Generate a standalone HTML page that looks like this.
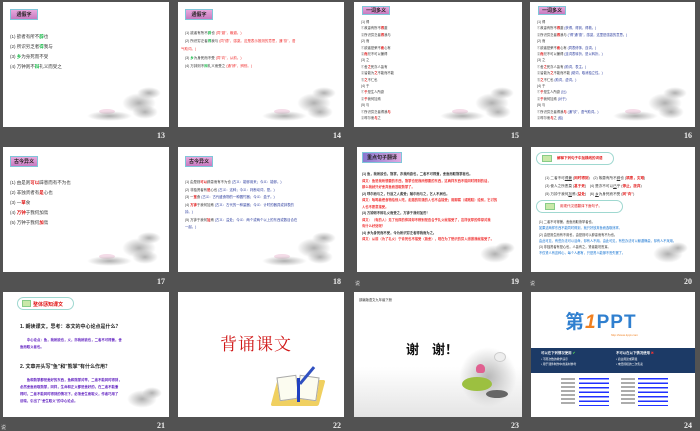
<!DOCTYPE html>
<html><head><meta charset="utf-8"><style>
*{margin:0;padding:0;box-sizing:border-box}
body{width:700px;height:431px;background:#525252;position:relative;overflow:hidden;font-family:"Liberation Sans","Noto Sans CJK SC",sans-serif}
.s{position:absolute;background:#fff;width:166px;height:125px;overflow:hidden}
.n{position:absolute;color:#eee;font-size:8px;font-weight:bold;font-family:"Liberation Serif",serif}
.tag{position:absolute;left:7px;top:7px;width:28px;height:11px;background:linear-gradient(#e7a8dc,#c77ac0);border:1px solid #7fc6d9;font-size:5px;color:#222;font-weight:bold;text-align:center;line-height:10px}
.l{position:absolute;left:7px;font-size:4.5px;color:#333;white-space:nowrap}
.g{color:#1ab94a;font-weight:bold}.r{color:#e01010;font-weight:bold}
.rr{color:#f03030}.b{color:#3040a0}
.lotus{position:absolute;right:2px;bottom:2px;width:80px;height:40px}
.lotus i{position:absolute;border-radius:50%;background:radial-gradient(#b0b0b0,rgba(220,220,220,0) 70%)}
.cap{position:absolute;left:1px;font-size:5px;color:#ddd}
</style></head><body>

<div class="s" style="left:3px;top:2px">
<div class="tag">通假字</div>
<div class="l" style="top:32px">(1) 欲者有所不<span class="g">辟</span>也</div>
<div class="l" style="top:42px">(2) 所识穷乏者<span class="g">得</span>我与</div>
<div class="l" style="top:52px">(3) <span class="g">乡</span>为身死而不受</div>
<div class="l" style="top:62px">(4) 万钟则不<span class="g">辩</span>礼义而受之</div>
<div class="lotus"><i style="left:35px;top:8px;width:34px;height:20px"></i><i style="left:50px;top:2px;width:24px;height:12px"></i><i style="left:12px;top:24px;width:16px;height:5px;background:#f4dce8"></i><i style="left:45px;top:20px;width:26px;height:14px"></i><i style="left:0;top:26px;width:45px;height:10px"></i></div>
</div>
<div class="n" style="left:157px;top:131px">13</div>

<div class="s" style="left:178px;top:2px">
<div class="tag">通假字</div>
<div class="l" style="top:29px;font-size:3.5px">(1) 欲者有所不<span class="g">辟</span>也 <span class="rr">(同"避"，躲避。)</span></div>
<div class="l" style="top:37px;font-size:3.5px">(2) 所识穷乏者<span class="g">得</span>我与 <span class="rr">(同"德"，感激。这是表示推测的意思，通"欤"，语</span></div>
<div class="l" style="top:45px;font-size:3.5px;left:3px"><span class="rr">气助词。)</span></div>
<div class="l" style="top:54px;font-size:3.5px">(3) <span class="g">乡</span>为身死而不受 <span class="rr">(同"向"，从前。)</span></div>
<div class="l" style="top:62px;font-size:3.5px">(4) 万钟则不<span class="g">辩</span>礼义而受之 <span class="rr">(通"辨"，辨别。)</span></div>
<div class="lotus"><i style="left:35px;top:8px;width:34px;height:20px"></i><i style="left:50px;top:2px;width:24px;height:12px"></i><i style="left:12px;top:24px;width:16px;height:5px;background:#f4dce8"></i><i style="left:45px;top:20px;width:26px;height:14px"></i><i style="left:0;top:26px;width:45px;height:10px"></i></div>
</div>
<div class="n" style="left:333px;top:131px">14</div>

<div class="s" style="left:354px;top:2px;width:168px">
<div class="tag" style="left:8px;top:4px;height:9px;line-height:8px">一词多义</div>
<div class="l" style="top:17px;font-size:3.3px;line-height:6.4px">(1) 得<br>①故患有所不<span class="r">得</span>避<br>②所识穷乏者<span class="r">得</span>我与<br>(2) 而<br>①欲者是荣不<span class="r">而</span>心有<br>②<span class="r">而</span>兄不可以兼得<br>(3) 之<br>①舍<span class="r">之</span>死亦人皆有<br>②皆能为<span class="r">之</span>不能而不能<br>③<span class="r">之</span>不仁也<br>(4) 于<br>①<span class="r">于</span>是生人所欲<br>②<span class="r">于</span>我何加焉<br>(5) 与<br>①所识穷乏者得我<span class="r">与</span><br>②呼尔而<span class="r">与</span>之</div>
<div class="lotus"><i style="left:35px;top:8px;width:34px;height:20px"></i><i style="left:50px;top:2px;width:24px;height:12px"></i><i style="left:12px;top:24px;width:16px;height:5px;background:#f4dce8"></i><i style="left:45px;top:20px;width:26px;height:14px"></i><i style="left:0;top:26px;width:45px;height:10px"></i></div>
</div>
<div class="n" style="left:511px;top:131px">15</div>

<div class="s" style="left:530px;top:2px;width:165px">
<div class="tag" style="left:8px;top:4px;height:9px;line-height:8px">一词多义</div>
<div class="l" style="top:17px;font-size:3.3px;line-height:6.4px">(1) 得<br>①故患有所不<span class="r">得</span>避 <span class="b">(获得，得到，得救。)</span><br>②所识穷乏者<span class="r">得</span>我与 <span class="b">("得"通"德"，感激，这里是感激的意思。)</span><br>(2) 而<br>①欲者是荣不<span class="r">而</span>心有 <span class="b">(同表修饰，连词。)</span><br>②<span class="r">而</span>兄不可以兼得 <span class="b">(连词表转折，是以转折。)</span><br>(3) 之<br>①舍<span class="r">之</span>死亦人皆有 <span class="b">(助词，表主。)</span><br>②皆能为<span class="r">之</span>不能而不能 <span class="b">(助词，取消独立性。)</span><br>③<span class="r">之</span>不仁也 <span class="b">(助词，虚词。)</span><br>(4) 于<br>①<span class="r">于</span>是生人所欲 <span class="b">(比)</span><br>②<span class="r">于</span>我何加焉 <span class="b">(对于)</span><br>(5) 与<br>①所识穷乏者得我<span class="r">与</span> <span class="b">(通"欤"，语气助词。)</span><br>②呼尔而<span class="r">与</span>之 <span class="b">(给)</span></div>
<div class="lotus"><i style="left:35px;top:8px;width:34px;height:20px"></i><i style="left:50px;top:2px;width:24px;height:12px"></i><i style="left:12px;top:24px;width:16px;height:5px;background:#f4dce8"></i><i style="left:45px;top:20px;width:26px;height:14px"></i><i style="left:0;top:26px;width:45px;height:10px"></i></div>
</div>
<div class="n" style="left:684px;top:131px">16</div>

<div class="s" style="left:3px;top:147px">
<div class="tag" style="top:9px">古今异义</div>
<div class="l" style="top:33px">(1) 由是则<span class="r">可以</span>辟患而有不为也</div>
<div class="l" style="top:43px">(2) 非独贤者有<span class="r">是</span>心也</div>
<div class="l" style="top:53px">(3) 一<span class="r">箪</span>食</div>
<div class="l" style="top:63px">(4) <span class="r">万钟</span>于我何加焉</div>
<div class="l" style="top:73px">(5) 万钟于我何<span class="r">加</span>焉</div>
<div class="lotus"><i style="left:35px;top:8px;width:34px;height:20px"></i><i style="left:50px;top:2px;width:24px;height:12px"></i><i style="left:12px;top:24px;width:16px;height:5px;background:#f4dce8"></i><i style="left:45px;top:20px;width:26px;height:14px"></i><i style="left:0;top:26px;width:45px;height:10px"></i></div>
</div>
<div class="n" style="left:157px;top:277px">17</div>

<div class="s" style="left:178px;top:147px">
<div class="tag" style="top:9px">古今异义</div>
<div class="l" style="top:32px;font-size:3.4px;line-height:7.5px">(1) 由是则<span class="r">可以</span>辟患而有不为也 <span class="b">(古义：能够用来；今义：能够。)</span><br>(2) 非独贤者有<span class="r">是</span>心也 <span class="b">(古义：这种；今义：判断动词，是。)</span><br>(3) 一<span class="r">箪</span>食 <span class="b">(古义：古代盛食物的一种圆竹器；今义：盒子。)</span><br>(4) <span class="r">万钟</span>于我何加焉 <span class="b">(古义：古代的一种量器；今义：计时的器具或钟表的</span><br><span class="b">钟。)</span><br>(5) 万钟于我何<span class="r">加</span>焉 <span class="b">(古义：益处；今义：两个或两个以上的东西或数目合在</span><br><span class="b">一起。)</span></div>
<div class="lotus"><i style="left:35px;top:8px;width:34px;height:20px"></i><i style="left:50px;top:2px;width:24px;height:12px"></i><i style="left:12px;top:24px;width:16px;height:5px;background:#f4dce8"></i><i style="left:45px;top:20px;width:26px;height:14px"></i><i style="left:0;top:26px;width:45px;height:10px"></i></div>
</div>
<div class="n" style="left:333px;top:277px">18</div>

<div class="s" style="left:357px;top:147px;width:165px">
<div class="tag" style="left:5px;top:5px;width:40px;background:linear-gradient(90deg,#8878d0,#e0a8e0)">重点句子翻译</div>
<div class="l" style="left:5px;top:24px;font-size:3.3px;line-height:6.5px;font-weight:bold">(1) 鱼，我所欲也，熊掌，亦我所欲也，二者不可得兼，舍鱼而取熊掌者也。<br><span class="rr">译文：鱼是我所想要的东西，熊掌也是我所想要的东西，这两样东西不能同时得到的话，</span><br><span class="rr">那么我就只好舍弃鱼而选取熊掌了。</span><br>(2) 呼尔而与之，行道之人弗受；蹴尔而与之，乞人不屑也。<br><span class="rr">译文：吆喝着把食物给别人吃，走路的饥饿的人也不会接受；用脚踢（或践踏）给别，乞讨的</span><br><span class="rr">人也不愿意接受。</span><br>(3) 万钟则不辩礼义而受之，万钟于我何加焉！<br><span class="rr">译文：（有的人）见了优厚的俸禄却不辨别是否合乎礼义就接受了，这样优厚的俸禄对我</span><br><span class="rr">有什么好处呢！</span><br>(4) 乡为身死而不受，今为所识穷乏者得我而为之。<br><span class="rr">译文：从前（为了礼义）宁肯死也不接受（施舍），现在为了熟识的穷人感激我就接受了。</span></div>
<div class="lotus" style="width:60px;height:30px"><i style="left:20px;top:5px;width:30px;height:18px"></i><i style="left:35px;top:2px;width:20px;height:12px"></i></div>
</div>
<div class="cap" style="top:280px;left:355px">说</div>
<div class="n" style="left:511px;top:277px">19</div>

<div class="s" style="left:531px;top:147px;width:164px">
<div style="position:absolute;left:5px;top:5px;width:78px;height:13px;border:1.5px solid #9fd8d0;border-radius:8px;background:#fff"></div>
<div style="position:absolute;left:11px;top:8px;width:10px;height:7px;background:#c9e8a8;border:1px solid #8c8"></div>
<div class="l" style="left:26px;top:9px;font-size:3.5px;color:#e01010;font-weight:bold">解释下列句子中加横线的词语</div>
<div class="l" style="left:14px;top:27px;font-size:3.6px;line-height:8px">(1) 二者不可<u>得兼</u> (<span class="r">同时得到</span>)　(2) 故患有所不<u>辟</u>也 (<span class="r">祸患，灾难</span>)<br>(3) 使人之所恶莫 (<span class="r">甚于死</span>)　(4) 是亦不可以<u>已</u>乎 (<span class="r">停止，放弃</span>)<br>(5) 万钟于我何<u>加</u>焉 (<span class="r">益处</span>)　(6) <u>乡</u>为身死而不受 (<span class="r">同"向"</span>)</div>
<div style="position:absolute;left:5px;top:53px;width:87px;height:13px;border:1.5px solid #9fd8d0;border-radius:8px;background:#fff"></div>
<div style="position:absolute;left:14px;top:56px;width:10px;height:7px;background:#c9e8a8;border:1px solid #8c8"></div>
<div class="l" style="left:29px;top:57px;font-size:3.5px;color:#e01010">用现代汉语翻译下面句子。</div>
<div class="l" style="left:8px;top:72px;font-size:3.2px;line-height:6.3px">(1) 二者不可得兼，舍鱼而取熊掌者也。<br><span style="color:#1070d0">如果这两样东西不能同时得到，就只好放弃鱼而选取熊掌。</span><br>(2) 由是则生而有不用也，由是则可以辟患而有不为也。<br><span style="color:#1070d0">由此可见，有些办法可以活命，却有人不用。由此可见，有些办法可以躲避祸患，却有人不采用。</span><br>(3) 非独贤者有是心也，人皆有之，贤者能勿丧耳。<br><span style="color:#1070d0">不仅贤人有这种心，每个人都有，只是贤人能够不丧失罢了。</span></div>
<div class="lotus" style="width:60px;height:30px"><i style="left:20px;top:5px;width:30px;height:18px"></i><i style="left:35px;top:2px;width:20px;height:12px"></i></div>
</div>
<div class="cap" style="top:280px;left:530px">说</div>
<div class="n" style="left:684px;top:277px">20</div>

<div class="s" style="left:3px;top:292px">
<div style="position:absolute;left:14px;top:5px;width:57px;height:13px;border:1.5px solid #9fd8d0;border-radius:8px"></div>
<div style="position:absolute;left:19px;top:8px;width:9px;height:7px;background:#c9e8a8;border:1px solid #8c8"></div>
<div class="l" style="left:30px;top:8.5px;font-size:5px;color:#e01010;font-weight:bold">整体感知课文</div>
<div class="l" style="left:17px;top:31px;font-size:5px;font-weight:bold;color:#222">1. 朗读课文，思考：本文的中心论点是什么？</div>
<div class="l" style="left:17px;top:45px;font-size:3.4px;line-height:7px;color:#6020c0;font-weight:bold">　　中心论点：鱼，我所欲也，义，亦我所欲也，二者不可得兼，舍<br>鱼而取义者也。</div>
<div class="l" style="left:17px;top:71px;font-size:5px;font-weight:bold;color:#222">2. 文章开头写"鱼"和"熊掌"有什么作用？</div>
<div class="l" style="left:17px;top:85px;font-size:3.4px;line-height:7px;color:#6020c0;font-weight:bold">　　鱼和熊掌都是美好的东西，鱼和熊掌对举，二者不能同时得到，<br>必然舍鱼而取熊掌，同样，生命和正义都是美好的，在二者不能兼<br>得时，二者不能同时得到的情况下，必须舍生而取义，作者巧用了<br>设喻，引出了"舍生取义"的中心论点。</div>
<div class="lotus" style="width:60px;height:30px"><i style="left:20px;top:5px;width:30px;height:18px"></i><i style="left:35px;top:2px;width:20px;height:12px"></i></div>
</div>
<div class="cap" style="top:424px;left:1px">说</div>
<div class="n" style="left:157px;top:421px">21</div>

<div class="s" style="left:178px;top:292px">
<div style="position:absolute;left:42px;top:38px;font-size:17px;color:#d01818;font-family:'Noto Serif CJK SC',serif;letter-spacing:1px">背诵课文</div>
<div style="position:absolute;left:96px;top:88px;width:48px;height:26px;background:#f0d060;transform:skewX(-15deg);border-radius:2px"></div>
<div style="position:absolute;left:100px;top:84px;width:20px;height:24px;background:#fcfcf0;border:1px solid #aaa;transform:rotate(-8deg)"></div>
<div style="position:absolute;left:120px;top:84px;width:20px;height:24px;background:#fcfcf0;border:1px solid #aaa;transform:rotate(8deg)"></div>
<div style="position:absolute;left:119px;top:86px;width:3px;height:24px;background:#2040c0"></div>
<div style="position:absolute;left:118px;top:82px;width:22px;height:3px;background:#3050c0;transform:rotate(-50deg)"></div>
</div>
<div class="n" style="left:333px;top:421px">22</div>

<div class="s" style="left:354px;top:292px;width:168px">
<div class="l" style="left:5px;top:5px;font-size:3.3px;color:#333">部编版语文九年级下册</div>
<div style="position:absolute;left:52px;top:47px;font-size:13px;font-weight:bold;color:#111">谢　谢！</div>
<div style="position:absolute;left:0;top:75px;width:168px;height:50px;background:linear-gradient(to top,#e4e4e4,#fff)"></div>
<div style="position:absolute;left:105px;top:55px;width:58px;height:60px;border-radius:40%;background:radial-gradient(#b8b8b8,rgba(255,255,255,0) 70%)"></div>
<div style="position:absolute;left:108px;top:85px;width:30px;height:14px;border-radius:50%;background:#9cc040"></div>
<div style="position:absolute;left:122px;top:72px;width:9px;height:9px;border-radius:50% 50% 30% 30%;background:#e06090"></div>
<div style="position:absolute;left:132px;top:98px;width:22px;height:8px;border-radius:50%;background:#666"></div>
<div style="position:absolute;left:140px;top:60px;width:12px;height:10px;border-radius:50%;background:#eee;border:1px solid #ccc"></div>
</div>
<div class="n" style="left:511px;top:421px">23</div>

<div class="s" style="left:531px;top:292px;width:164px">
<div style="position:absolute;left:34px;top:20px;font-size:19px;font-weight:bold;color:#2f7fcf;letter-spacing:1px;line-height:22px">第<span style="color:#f08020;font-style:italic">1</span>PPT</div>
<div style="position:absolute;left:80px;top:41px;font-size:3px;color:#f08020">http://www.1ppt.com</div>
<div style="position:absolute;left:0;top:56px;width:164px;height:25px;background:#1c3a66"></div>
<div class="l" style="left:10px;top:59px;font-size:3.4px;color:#fff;line-height:5.5px;font-weight:bold">可以在下列情况使用 <span style="color:#5d5">✔</span><br><span style="font-weight:normal;font-size:2.8px">• 不限次数的教学演示<br>• 用于课件制作中的素材参考</span></div>
<div class="l" style="left:85px;top:59px;font-size:3.4px;color:#fff;line-height:5.5px;font-weight:bold">不可以在以下情况使用 <span style="color:#e33">✖</span><br><span style="font-weight:normal;font-size:2.8px">• 商业用途或转载<br>• 未经授权的二次售卖</span></div>
<div style="position:absolute;left:30px;top:86px;width:14px;height:28px;background:repeating-linear-gradient(#888 0 2px,#fff 2px 4px);opacity:.7"></div>
<div style="position:absolute;left:48px;top:86px;width:30px;height:28px;background:repeating-linear-gradient(#2030ff 0 1.5px,#fff 1.5px 4.5px)"></div>
<div style="position:absolute;left:90px;top:86px;width:14px;height:28px;background:repeating-linear-gradient(#888 0 2px,#fff 2px 4px);opacity:.7"></div>
<div style="position:absolute;left:107px;top:86px;width:30px;height:28px;background:repeating-linear-gradient(#2030ff 0 1.5px,#fff 1.5px 4.5px)"></div>
</div>
<div class="n" style="left:684px;top:421px">24</div>

</body></html>
